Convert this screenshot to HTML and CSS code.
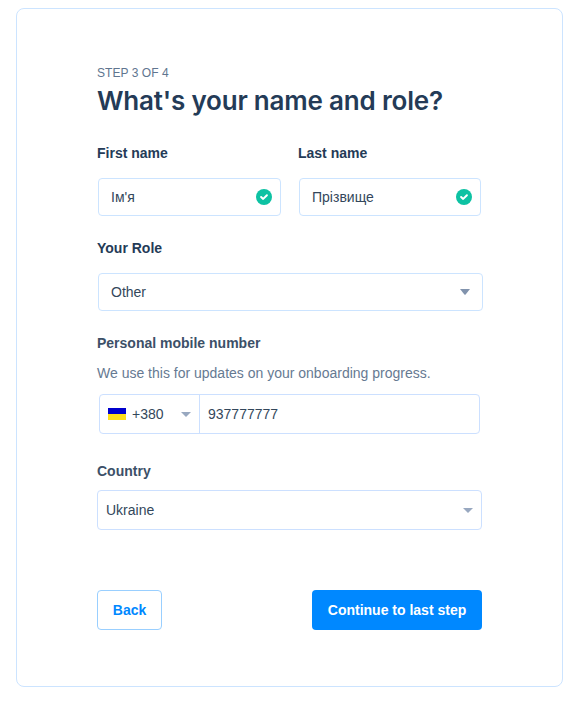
FILE: index.html
```html
<!DOCTYPE html>
<html lang="en">
<head>
<meta charset="utf-8">
<title>What's your name and role?</title>
<link rel="stylesheet" href="styles.css">
</head>
<body>
<main class="card">
  <div class="step"><span>STEP 3 OF 4</span></div>
  <h1 class="title"><span>What's your name and role?</span></h1>
  <div class="names">
    <div class="field first">
      <div class="label"><span>First name</span></div>
      <div class="input"><span>Ім'я</span>
        <svg class="check" viewBox="0 0 16 16"><circle cx="8" cy="8" r="8" fill="#0dc2a3"/><path d="M5.1 8 7.2 9.9 10.9 6.3" fill="none" stroke="#fff" stroke-width="2" stroke-linecap="round" stroke-linejoin="round"/></svg>
      </div>
    </div>
    <div class="field last">
      <div class="label"><span>Last name</span></div>
      <div class="input"><span>Прізвище</span>
        <svg class="check" viewBox="0 0 16 16"><circle cx="8" cy="8" r="8" fill="#0dc2a3"/><path d="M5.1 8 7.2 9.9 10.9 6.3" fill="none" stroke="#fff" stroke-width="2" stroke-linecap="round" stroke-linejoin="round"/></svg>
      </div>
    </div>
  </div>
  <div class="field role">
    <div class="label"><span>Your Role</span></div>
    <div class="input"><span>Other</span><svg class="caret" viewBox="0 0 10 6"><path d="M0 0H10L5.6 5.5Q5 6 4.4 5.5Z"/></svg></div>
  </div>
  <div class="field phone">
    <div class="label soft"><span>Personal mobile number</span></div>
    <p class="hint"><span>We use this for updates on your onboarding progress.</span></p>
    <div class="phone-box">
      <div class="code"><i class="flag"></i><span>+380</span><svg class="caret light" viewBox="0 0 10 5"><path d="M0 0H10L5 5Z"/></svg></div>
      <div class="number"><span>937777777</span></div>
    </div>
  </div>
  <div class="field country">
    <div class="label soft"><span>Country</span></div>
    <div class="select"><span>Ukraine</span><svg class="caret light" viewBox="0 0 10 5"><path d="M0 0H10L5 5Z"/></svg></div>
  </div>
  <div class="actions">
    <button class="btn back"><span>Back</span></button>
    <button class="btn next"><span>Continue to last step</span></button>
  </div>
</main>
</body>
</html>
```
FILE: styles.css
```css
* { box-sizing: border-box; }
body {
  margin: 0;
  padding: 8px 21px 16px 16px;
  background: #fff;
  font-family: "Liberation Sans", Arial, sans-serif;
  font-size: 14px;
  color: #33475b;
}
.card {
  width: 547px;
  height: 679px;
  padding: 55px 80px 0;
  border: 1px solid #cce4ff;
  border-radius: 8px;
}
.step { height: 18px; line-height: 18px; font-size: 12px; letter-spacing: 0.05px; color: #60758f; }
.title {
  margin: 0;
  height: 38px;
  line-height: 38px;
  font-family: Inter, sans-serif;
  font-size: 26px;
  font-weight: 600;
  letter-spacing: -0.19px;
  white-space: nowrap;
  color: #243b57;
}
.names { display: flex; margin-top: 23px; }
.first { width: 184px; }
.last { width: 184px; margin-left: 17px; }
.label { height: 20px; line-height: 20px; font-weight: 700; color: #243b57; white-space: nowrap; }
.soft { color: #3c5068; }
.input, .select {
  display: flex;
  align-items: center;
  justify-content: space-between;
  border: 1px solid #cce4ff;
  border-radius: 4px;
}
.input { height: 38px; margin: 15px 0 0 1px; padding: 0 8px 0 12px; }
.last .input { width: 182px; }
.check { width: 16px; height: 16px; }
.role { margin-top: 22px; }
.role .input { width: 385px; padding-right: 12px; }
.caret { width: 10px; height: 6px; fill: #8193ad; }
.light { height: 5px; fill: #98a8c0; }
.phone { margin-top: 22px; }
.hint { margin: 10px 0 0; height: 20px; line-height: 20px; color: #667a92; white-space: nowrap; }
.phone-box {
  display: flex;
  width: 381px;
  height: 40px;
  margin: 11px 0 0 2px;
  border: 1px solid #cce0ff;
  border-radius: 4px;
}
.code { display: flex; align-items: center; width: 100px; padding: 0 8px; border-right: 1px solid #cce0ff; }
.flag { width: 18px; height: 12px; margin-right: 6px; background: linear-gradient(#0000cd 50%, #ffdf1b 50%); }
.code .caret { margin-left: auto; }
.number { display: flex; align-items: center; padding-left: 8px; }
.country { margin-top: 27px; }
.select { width: 385px; height: 40px; margin-top: 9px; padding: 0 8px; border-color: #cce0ff; }
.actions { display: flex; justify-content: space-between; width: 385px; margin-top: 60px; }
.btn { height: 40px; padding: 0; font: 700 14px "Liberation Sans", Arial, sans-serif; border-radius: 4px; white-space: nowrap; }
.back { width: 65px; color: #0088ff; background: #fff; border: 1px solid #99cfff; }
.next { width: 170px; color: #fff; background: #0088ff; border: 0; }
```
